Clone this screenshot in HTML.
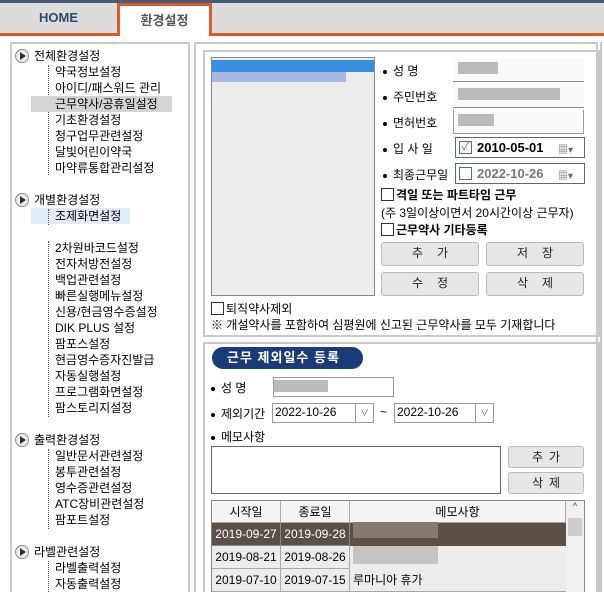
<!DOCTYPE html><html style="width:604px;height:592px;overflow:hidden"><head><meta charset="utf-8"><style>
*{margin:0;padding:0;box-sizing:border-box}
body{width:604px;height:592px;overflow:hidden;background:#fff;font-family:"Liberation Sans","Noto Sans CJK KR","NanumGothic",sans-serif;font-size:12px;color:#000;position:relative}
.a{position:absolute}
.t{position:absolute;left:55px;white-space:nowrap;font-size:12px;line-height:16px}
.h{position:absolute;left:34px;white-space:nowrap;font-size:12px;line-height:16px}
.ic{position:absolute;left:15px;width:14px;height:14px;border:1px solid #888;border-radius:50%;background:#eee}
.ic:after{content:"";position:absolute;left:4px;top:2px;border-left:6px solid #333;border-top:4px solid transparent;border-bottom:4px solid transparent}
.dl{position:absolute;left:48px;border-left:1px dotted #555}
.btn{position:absolute;background:#e6e6e6;border:1px solid #bbb;border-radius:3px;text-align:center;font-size:12px;line-height:21px;color:#222;letter-spacing:14px;text-indent:14px}
.lab{position:absolute;left:383px;font-size:12px;line-height:14px;white-space:nowrap}
.lab:before{content:"";display:inline-block;width:4px;height:4px;background:#000;border-radius:50%;margin-right:6px;vertical-align:middle}
.inp{position:absolute;left:453px;width:131px;height:24px;background:#fafafa;border-bottom:1px solid #888}
.blur{position:absolute;background:#bbb}
.cb{display:inline-block;width:13px;height:13px;border:1px solid #333;vertical-align:-2px;margin-right:2px;background:#fff}
.cell{position:absolute;border-right:1px solid #aaa;border-bottom:1px solid #aaa;font-size:12px;line-height:22px;text-align:center}
</style></head><body>
<div class="a" style="left:0;top:0;width:604px;height:3px;background:#4a5a7a"></div>
<div class="a" style="left:0;top:3px;width:604px;height:33px;background:#dcdcdc"></div>
<div class="a" style="left:0;top:33px;width:604px;height:3px;background:#e05a28"></div>
<div class="a" style="left:0;top:3px;width:117px;height:30px;text-align:center;line-height:30px;font-weight:bold;font-size:13px;color:#2d4a6a">HOME</div>
<div class="a" style="left:117px;top:3px;width:95px;height:33px;background:#fff;border:3px solid #e05a28;border-bottom:none;text-align:center;line-height:30px;font-weight:bold;font-size:13px;color:#555">환경설정</div>
<div class="a" style="left:10px;top:42px;width:180px;height:550px;border:2px solid #c8c8c8;border-bottom:none"></div>
<div class="a" style="left:194px;top:42px;width:404px;height:550px;border:2px solid #c8c8c8;border-bottom:none"></div>
<div class="a" style="left:600px;top:42px;width:4px;height:550px;border-left:2px solid #c8c8c8"></div>

<div class="ic" style="top:49px"></div><div class="h" style="top:48px">전체환경설정</div>
<div class="dl" style="top:65px;height:110px"></div>
<div class="a" style="left:31px;top:96px;width:141px;height:16px;background:#d4d4d4"></div>
<div class="t" style="top:64px">약국정보설정</div><div class="t" style="top:80px">아이디/패스워드 관리</div><div class="t" style="top:96px">근무약사/공휴일설정</div><div class="t" style="top:112px">기초환경설정</div><div class="t" style="top:128px">청구업무관련설정</div><div class="t" style="top:144px">달빛어린이약국</div><div class="t" style="top:160px">마약류통합관리설정</div>
<div class="ic" style="top:193px"></div><div class="h" style="top:192px">개별환경설정</div>
<div class="a" style="left:31px;top:208px;width:99px;height:16px;background:#e0ecf8"></div>
<div class="dl" style="top:209px;height:16px"></div><div class="dl" style="top:241px;height:176px"></div>
<div class="t" style="top:208px">조제화면설정</div>
<div class="t" style="top:240px">2차원바코드설정</div><div class="t" style="top:256px">전자처방전설정</div><div class="t" style="top:272px">백업관련설정</div><div class="t" style="top:288px">빠른실행메뉴설정</div><div class="t" style="top:304px">신용/현금영수증설정</div><div class="t" style="top:320px">DIK PLUS 설정</div><div class="t" style="top:336px">팜포스설정</div><div class="t" style="top:352px">현금영수증자진발급</div><div class="t" style="top:368px">자동실행설정</div><div class="t" style="top:384px">프로그램화면설정</div><div class="t" style="top:400px">팜스토리지설정</div>
<div class="ic" style="top:433px"></div><div class="h" style="top:432px">출력환경설정</div>
<div class="dl" style="top:449px;height:80px"></div>
<div class="t" style="top:448px">일반문서관련설정</div><div class="t" style="top:464px">봉투관련설정</div><div class="t" style="top:480px">영수증관련설정</div><div class="t" style="top:496px">ATC장비관련설정</div><div class="t" style="top:512px">팜포트설정</div>
<div class="ic" style="top:545px"></div><div class="h" style="top:544px">라벨관련설정</div>
<div class="dl" style="top:561px;height:31px"></div>
<div class="t" style="top:560px">라벨출력설정</div><div class="t" style="top:576px">자동출력설정</div>

<div class="a" style="left:203px;top:50px;width:397px;height:287px;border:2px solid #c8c8c8"></div>
<div class="a" style="left:211px;top:57px;width:164px;height:239px;background:#ececec;border:1px solid #888"></div>
<div class="a" style="left:212px;top:60px;width:162px;height:12px;background:#3a8ee0"></div>
<div class="a" style="left:212px;top:72px;width:134px;height:10px;background:#a8b8e0"></div>
<div class="lab" style="top:64px">성 명</div><div class="lab" style="top:90px">주민번호</div><div class="lab" style="top:116px">면허번호</div><div class="lab" style="top:142px">입 사 일</div><div class="lab" style="top:168px">최종근무일</div>
<div class="inp" style="top:58px"></div><div class="blur" style="left:458px;top:62px;width:40px;height:12px"></div>
<div class="inp" style="top:84px"></div><div class="blur" style="left:458px;top:88px;width:102px;height:12px"></div>
<div class="inp" style="top:110px;border:1px solid #999;border-top:none"></div><div class="blur" style="left:458px;top:114px;width:36px;height:12px"></div>
<div class="a" style="left:455px;top:137px;width:130px;height:21px;border:1px solid #666;background:#fff;font-weight:bold;font-size:13px;line-height:19px;padding-left:21px">2010-05-01</div>
<div class="a" style="left:459px;top:141px;width:13px;height:13px;border:1px solid #3a70c0;color:#3a70c0;font-size:11px;line-height:11px;text-align:center">✓</div>
<div class="a" style="left:558px;top:141px;font-size:10px;color:#666">▦▾</div>
<div class="a" style="left:455px;top:163px;width:130px;height:21px;border:1px solid #666;background:#fff;font-weight:bold;font-size:13px;line-height:19px;padding-left:21px;color:#777">2022-10-26</div>
<div class="a" style="left:459px;top:167px;width:13px;height:13px;border:1px solid #3a70c0"></div>
<div class="a" style="left:558px;top:167px;font-size:10px;color:#666">▦▾</div>
<div class="a" style="left:381px;top:186px;font-weight:bold;font-size:12px"><span class="cb"></span>격일 또는 파트타임 근무</div>
<div class="a" style="left:381px;top:204px;font-size:12px;white-space:nowrap">(주 3일이상이면서 20시간이상 근무자)</div>
<div class="a" style="left:381px;top:221px;font-weight:bold;font-size:12px"><span class="cb"></span>근무약사 기타등록</div>
<div class="btn" style="left:381px;top:242px;width:98px;height:24px">추가</div>
<div class="btn" style="left:486px;top:242px;width:98px;height:24px">저장</div>
<div class="btn" style="left:381px;top:272px;width:98px;height:24px">수정</div>
<div class="btn" style="left:486px;top:272px;width:98px;height:24px">삭제</div>
<div class="a" style="left:211px;top:300px;font-size:12px"><span class="cb"></span>퇴직약사제외</div>
<div class="a" style="left:211px;top:316px;font-size:12px;white-space:nowrap">※ 개설약사를 포함하여 심평원에 신고된 근무약사를 모두 기재합니다</div>

<div class="a" style="left:203px;top:342px;width:397px;height:250px;border:2px solid #c8c8c8;border-bottom:none"></div>
<div class="a" style="left:212px;top:347px;width:151px;height:22px;background:#1a3a7a;border-radius:11px;color:#fff;font-weight:bold;font-size:13px;line-height:22px;padding-left:15px;letter-spacing:1px">근무 제외일수 등록</div>
<div class="lab" style="left:211px;top:381px">성 명</div>
<div class="a" style="left:273px;top:377px;width:121px;height:20px;border:1px solid #999;background:#fff"></div><div class="blur" style="left:274px;top:380px;width:54px;height:12px"></div>
<div class="lab" style="left:211px;top:407px">제외기간</div>
<div class="a" style="left:272px;top:403px;width:102px;height:20px;border:1px solid #999;background:#fff;line-height:17px;padding-left:2px">2022-10-26</div><div class="a" style="left:355px;top:404px;width:18px;height:18px;border-left:1px solid #999;text-align:center;font-size:9px;line-height:18px;color:#666">∨</div>
<div class="a" style="left:380px;top:405px">~</div>
<div class="a" style="left:394px;top:403px;width:100px;height:20px;border:1px solid #999;background:#fff;line-height:17px;padding-left:2px">2022-10-26</div><div class="a" style="left:475px;top:404px;width:18px;height:18px;border-left:1px solid #999;text-align:center;font-size:9px;line-height:18px;color:#666">∨</div>
<div class="lab" style="left:211px;top:430px">메모사항</div>
<div class="a" style="left:211px;top:446px;width:290px;height:48px;border:1px solid #666;background:#fff"></div>
<div class="btn" style="left:508px;top:446px;width:76px;height:22px;letter-spacing:6px;text-indent:6px">추가</div>
<div class="btn" style="left:508px;top:472px;width:76px;height:22px;letter-spacing:6px;text-indent:6px">삭제</div>
<div class="a" style="left:211px;top:500px;width:374px;height:92px;border:1px solid #888;border-bottom:none;background:#fff"></div>
<div class="cell" style="left:212px;top:501px;width:69px;height:22px;background:#f4f4f4">시작일</div>
<div class="cell" style="left:281px;top:501px;width:69px;height:22px;background:#f4f4f4">종료일</div>
<div class="cell" style="left:350px;top:501px;width:216px;height:22px;background:#f4f4f4">메모사항</div>
<div class="a" style="left:566px;top:501px;width:18px;height:91px;background:#f0f0f0;font-size:9px;text-align:center;color:#444">^</div>
<div class="a" style="left:568px;top:518px;width:14px;height:18px;background:#cdcdcd"></div>
<div class="a" style="left:212px;top:523px;width:354px;height:23px;background:#5b5048"></div>
<div class="cell" style="left:212px;top:523px;width:69px;height:23px;color:#fff;border-color:#888">2019-09-27</div>
<div class="cell" style="left:281px;top:523px;width:69px;height:23px;color:#fff;border-color:#888">2019-09-28</div>
<div class="blur" style="left:353px;top:522px;width:85px;height:16px;background:#857a72"></div>
<div class="a" style="left:212px;top:546px;width:354px;height:46px;background:#ececec"></div>
<div class="cell" style="left:212px;top:546px;width:69px;height:23px">2019-08-21</div>
<div class="cell" style="left:281px;top:546px;width:69px;height:23px">2019-08-26</div>
<div class="blur" style="left:353px;top:546px;width:85px;height:18px;background:#c4c4c4"></div>
<div class="cell" style="left:212px;top:569px;width:69px;height:23px">2019-07-10</div>
<div class="cell" style="left:281px;top:569px;width:69px;height:23px">2019-07-15</div>
<div class="cell" style="left:350px;top:569px;width:216px;height:23px;text-align:left;padding-left:3px;border-right:none">루마니아 휴가</div>
</body></html>
